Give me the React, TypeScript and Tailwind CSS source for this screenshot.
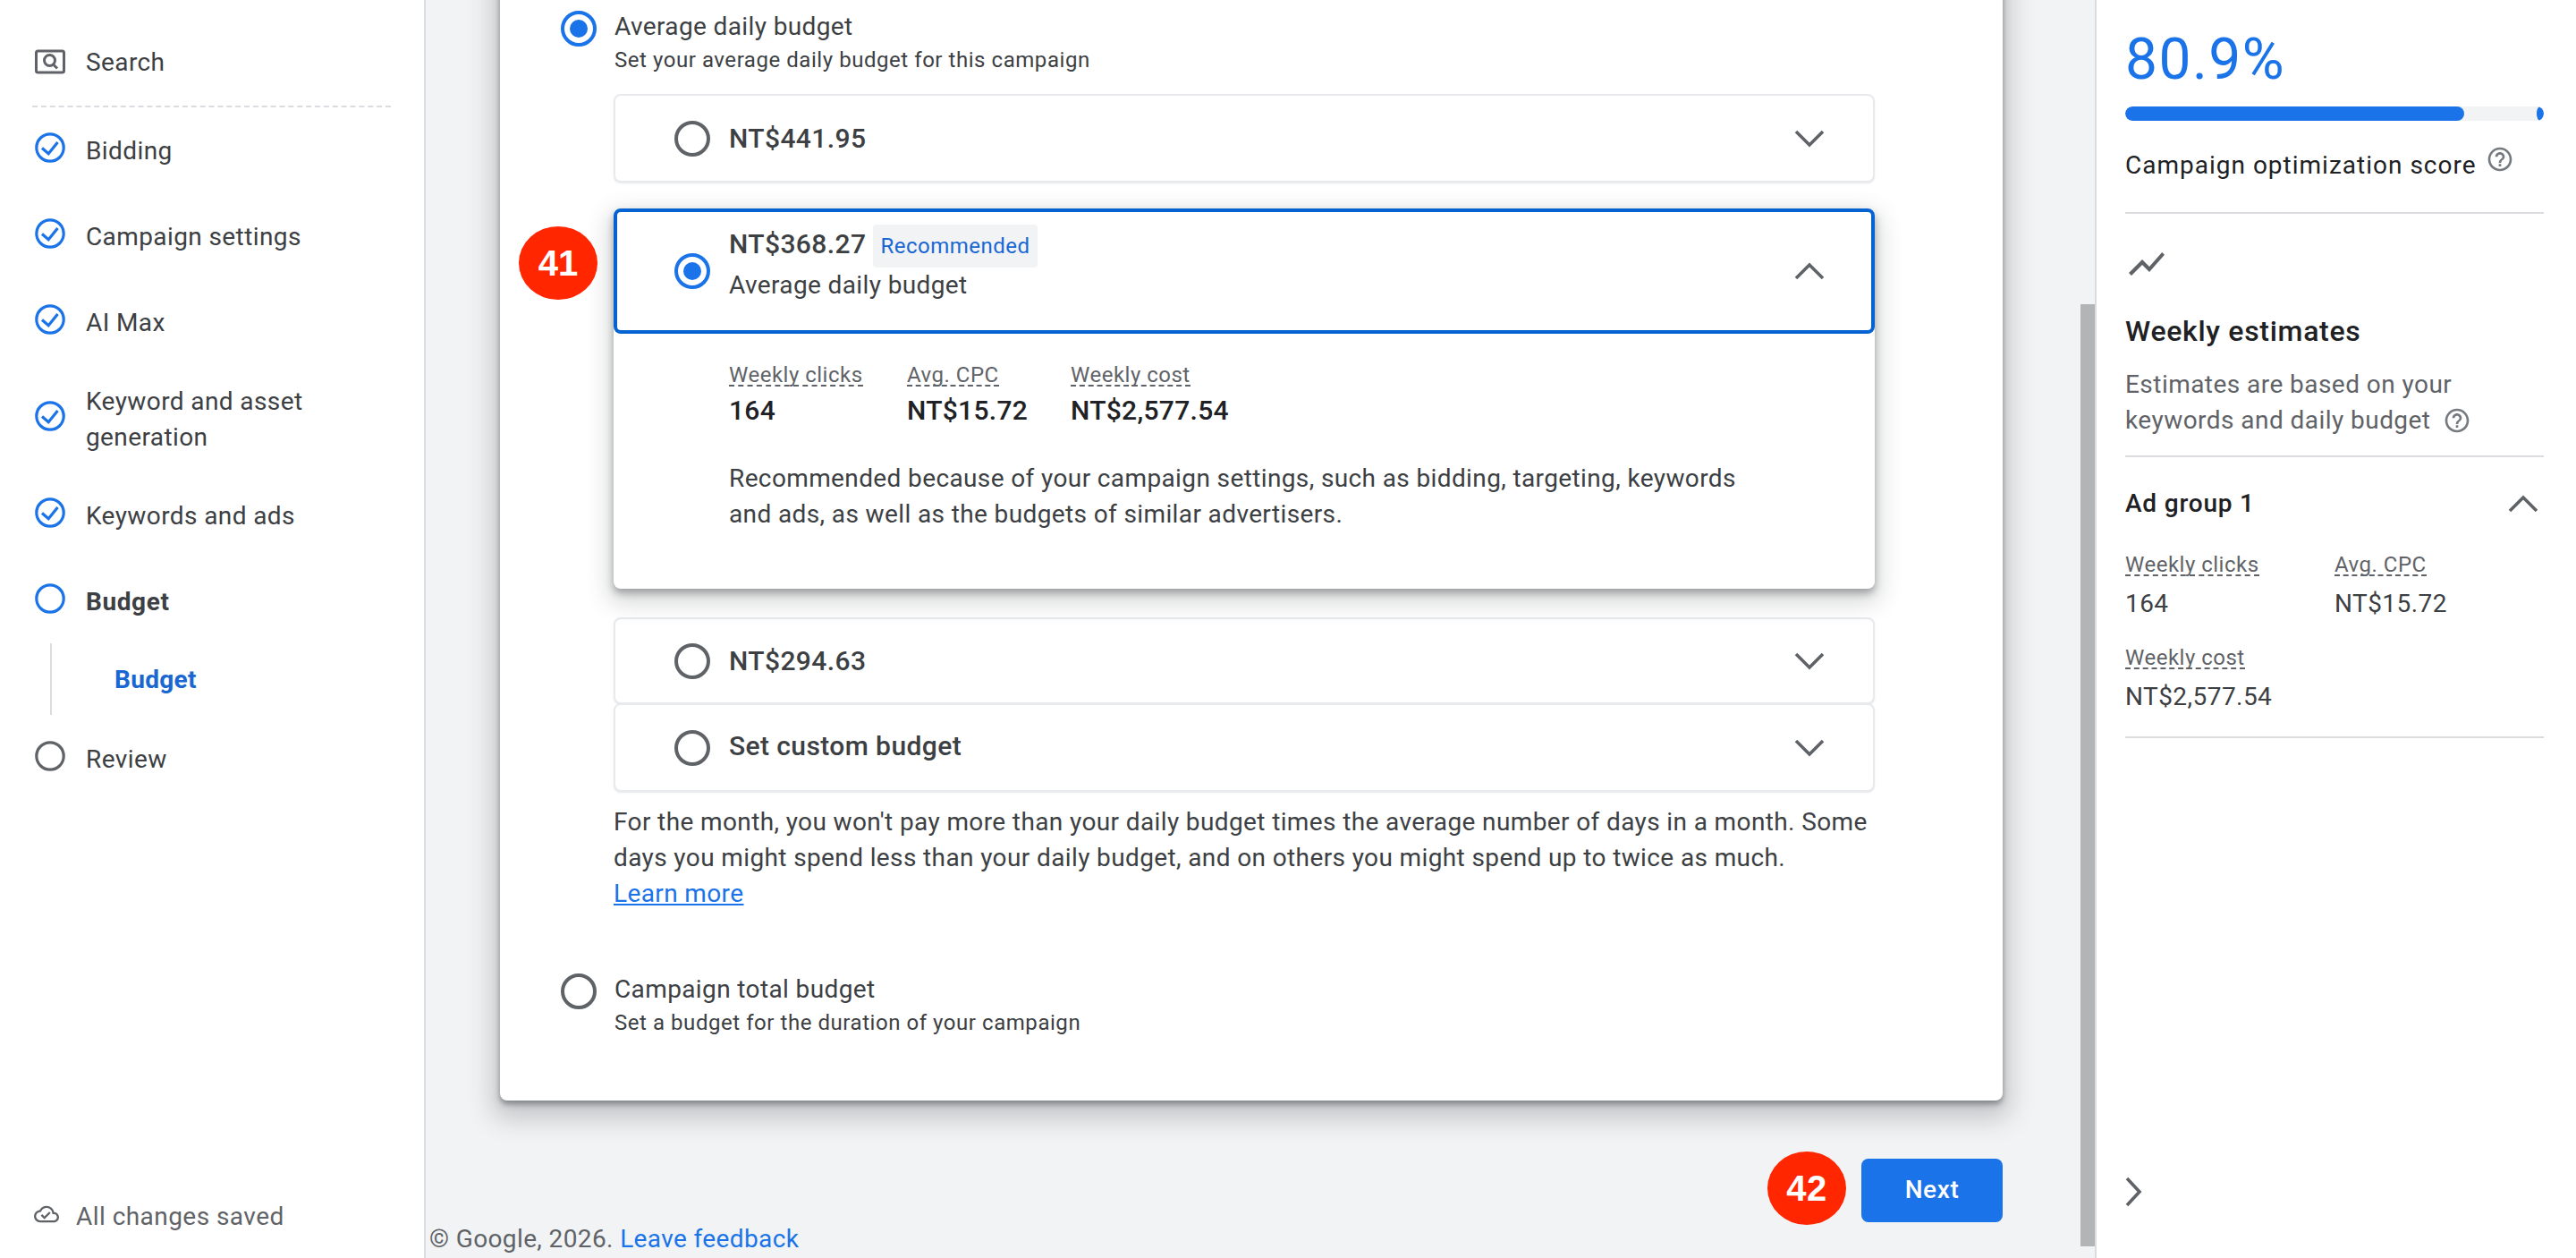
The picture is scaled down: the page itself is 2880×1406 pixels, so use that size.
import React from "react";

const Check = () => (
  <svg width="34" height="34" viewBox="0 0 34 34" fill="none" className="shrink-0">
    <circle cx="17" cy="17" r="15.2" stroke="#1a73e8" strokeWidth="3.2" />
    <path d="M8 17.5l7.2 6.3L25.5 11" stroke="#1a73e8" strokeWidth="3.2" />
  </svg>
);
const Ring = ({ color }: { color: string }) => (
  <svg width="34" height="34" viewBox="0 0 34 34" fill="none" className="shrink-0">
    <circle cx="17" cy="17" r="15.2" stroke={color} strokeWidth="3.2" />
  </svg>
);
const SearchIcon = () => (
  <svg width="34" height="34" viewBox="0 0 34 34" fill="none" className="shrink-0">
    <rect x="1.5" y="5" width="31" height="24" rx="2" stroke="#5f6368" strokeWidth="3" />
    <circle cx="16.5" cy="15.5" r="6" stroke="#5f6368" strokeWidth="3" />
    <path d="M20.5 20l4.5 4.5" stroke="#5f6368" strokeWidth="3" />
  </svg>
);
const Radio = ({ on }: { on?: boolean }) => (
  <svg width="40" height="40" viewBox="0 0 40 40" fill="none" className="shrink-0">
    <circle cx="20" cy="20" r="18" stroke={on ? "#1a73e8" : "#5f6368"} strokeWidth="4" />
    {on && <circle cx="20" cy="20" r="10" fill="#1a73e8" />}
  </svg>
);
const Chevron = ({ dir }: { dir: "up" | "down" | "right" }) => {
  if (dir === "right")
    return (
      <svg width="20" height="34" viewBox="0 0 20 34" fill="none">
        <path d="M2 2l14 15L2 32" stroke="#5f6368" strokeWidth="3.6" />
      </svg>
    );
  return (
    <svg width="34" height="20" viewBox="0 0 34 20" fill="none">
      <path d={dir === "down" ? "M2 2l15 15L32 2" : "M2 18L17 3l15 15"} stroke="#5f6368" strokeWidth="3.6" />
    </svg>
  );
};
const Help = () => (
  <svg width="32" height="32" viewBox="0 0 24 24" fill="#757a80" className="shrink-0">
    <path d="M11 18h2v-2h-2v2zm1-16C6.48 2 2 6.48 2 12s4.48 10 10 10 10-4.48 10-10S17.52 2 12 2zm0 18c-4.41 0-8-3.59-8-8s3.59-8 8-8 8 3.59 8 8-3.59 8-8 8zm0-14c-2.21 0-4 1.79-4 4h2c0-1.1.9-2 2-2s2 .9 2 2c0 2-3 1.75-3 5h2c0-2.25 3-2.5 3-5 0-2.21-1.79-4-4-4z" />
  </svg>
);
const Badge = ({ n, cls }: { n: string; cls: string }) => (
  <div className={"absolute flex h-[82px] w-[88px] items-center justify-center rounded-[50%] bg-[#ff2600] font-['Liberation_Sans',sans-serif] text-[40px] font-bold text-white " + cls}>
    {n}
  </div>
);

const NavRow = ({ icon, children, h = "h-[96px]", t = "mt-[7px]" }: { icon: React.ReactNode; children: React.ReactNode; h?: string; t?: string }) => (
  <div className={"flex items-center gap-[23px] pl-[3px] text-[28px] leading-[40px] tracking-[0.4px] text-[#3c4043] " + h}>
    {icon}
    <div className={t}>{children}</div>
  </div>
);

const Option = ({ label, h, t = "" }: { label: string; h: string; t?: string }) => (
  <div className={"flex items-center justify-between rounded-[8px] border-2 border-[#e8eaed] bg-white pl-[66px] pr-[54px] shadow-[0_1px_2px_rgba(60,64,67,0.12)] " + h}>
    <div className="flex items-center gap-[21px]">
      <Radio />
      <span className={"text-[30px] font-medium leading-[40px] tracking-[0.4px] text-[#3c4043] " + t}>{label}</span>
    </div>
    <Chevron dir="down" />
  </div>
);

const Dashed = ({ children }: { children: React.ReactNode }) => (
  <span className="inline-block border-b-2 border-dashed border-[#5f6368] text-[24px] leading-[22px] tracking-[0.5px] text-[#5f6368]">{children}</span>
);

export default function App() {
  return (
    <div className="flex h-screen w-full overflow-hidden bg-white font-['Roboto',sans-serif]">
      {/* left nav */}
      <aside className="flex w-[476px] shrink-0 flex-col border-r-2 border-[#dadce0] bg-white pl-[36px] pr-[37px] pt-[21px]">
        <div className="-mb-[3px] h-[99px] border-b-2 border-dashed border-[#dadce0]">
          <NavRow icon={<SearchIcon />} t="mt-[1px]">Search</NavRow>
        </div>
        <NavRow icon={<Check />}>Bidding</NavRow>
        <NavRow icon={<Check />}>Campaign settings</NavRow>
        <NavRow icon={<Check />}>AI Max</NavRow>
        <NavRow icon={<Check />} h="h-[120px]">
          Keyword and asset
          <br />
          generation
        </NavRow>
        <NavRow icon={<Check />}>Keywords and ads</NavRow>
        <NavRow icon={<Ring color="#1a73e8" />}>
          <span className="font-bold tracking-[0.6px]">Budget</span>
        </NavRow>
        <div className="ml-[20px] mt-[2px] -mb-[2px] flex h-[80px] items-center border-l-2 border-[#dadce0] pl-[70px] text-[28px] font-bold leading-[40px] tracking-[0.3px] text-[#1a67d2]">
          <span className="mt-[2px]">Budget</span>
        </div>
        <NavRow icon={<Ring color="#5f6368" />}>Review</NavRow>
        <div className="mt-auto mb-[26px] flex h-[40px] items-center gap-[19px] pl-[2px] text-[28px] leading-[40px] tracking-[0.45px] text-[#5f6368]">
          <svg width="28" height="28" viewBox="0 0 24 24" fill="#5f6368" className="-mt-[6px] shrink-0">
            <path d="M19.35 10.04C18.67 6.59 15.64 4 12 4 9.11 4 6.6 5.64 5.35 8.04 2.34 8.36 0 10.91 0 14c0 3.31 2.69 6 6 6h13c2.76 0 5-2.24 5-5 0-2.64-2.05-4.78-4.65-4.96zM19 18H6c-2.21 0-4-1.79-4-4 0-2.05 1.53-3.76 3.56-3.97l1.07-.11.5-.95C8.08 7.14 9.94 6 12 6c2.62 0 4.88 1.86 5.39 4.43l.3 1.5 1.53.11c1.56.1 2.78 1.41 2.78 2.96 0 1.65-1.35 3-3 3zm-9-3.82l-2.09-2.09L6.5 13.5 10 17l6.01-6.01-1.41-1.41z" />
          </svg>
          All changes saved
        </div>
      </aside>

      {/* main */}
      <main className="relative flex min-w-0 flex-1 flex-col bg-[#f1f3f4]">
        <div className="absolute bottom-[13px] right-0 top-[340px] w-[16px] bg-[#b3b4b6]" />
        <div className="ml-[83px] mr-[103px] -mt-[40px] rounded-[8px] bg-white pb-[71px] pt-[50px] shadow-[0_4px_6px_rgba(60,64,67,0.5),0_12px_28px_8px_rgba(60,64,67,0.25)]">
          <div className="ml-[68px] flex gap-[20px]">
            <div className="mt-[2px]">
              <Radio on />
            </div>
            <div>
              <div className="text-[28px] leading-[40px] tracking-[0.38px] text-[#3c4043]">Average daily budget</div>
              <div className="mt-px text-[24px] leading-[32px] tracking-[0.55px] text-[#3c4043]">Set your average daily budget for this campaign</div>
            </div>
          </div>
          <div className="ml-[127px] mr-[143px]">
            <div className="mt-[22px]">
              <Option label="NT$441.95" h="h-[99px]" />
            </div>
            <div className="relative mt-[29px] rounded-[8px] bg-white shadow-[0_5px_8px_rgba(60,64,67,0.4),0_10px_26px_6px_rgba(60,64,67,0.2)]">
              <Badge n="41" cls="-left-[106px] top-[20px]" />
              <div className="flex h-[140px] items-center justify-between rounded-[8px] border-4 border-[#0563d1] pl-[64px] pr-[52px]">
                <div className="flex h-full items-center gap-[21px]">
                  <Radio on />
                  <div className="self-start pt-[14px]">
                    <div className="flex h-[48px] items-center gap-[8px]">
                      <span className="-mt-[4px] text-[30px] font-medium leading-[40px] tracking-[0.4px] text-[#3c4043]">NT$368.27</span>
                      <span className="flex h-[48px] items-center rounded-[4px] bg-[#f1f3f4] px-[8px] text-[24px] tracking-[0.5px] text-[#1967d2]">Recommended</span>
                    </div>
                    <div className="text-[28px] leading-[40px] tracking-[0.38px] text-[#3c4043]">Average daily budget</div>
                  </div>
                </div>
                <Chevron dir="up" />
              </div>
              <div className="h-[285px] pl-[129px] pt-[35px]">
                <div className="flex">
                  <div className="w-[199px]">
                    <Dashed>Weekly clicks</Dashed>
                    <div className="mt-[5px] text-[30px] font-medium leading-[40px] tracking-[0.3px] text-[#202124]">164</div>
                  </div>
                  <div className="w-[183px]">
                    <Dashed>Avg. CPC</Dashed>
                    <div className="mt-[5px] text-[30px] font-medium leading-[40px] tracking-[0.3px] text-[#202124]">NT$15.72</div>
                  </div>
                  <div>
                    <Dashed>Weekly cost</Dashed>
                    <div className="mt-[5px] text-[30px] font-medium leading-[40px] tracking-[0.3px] text-[#202124]">NT$2,577.54</div>
                  </div>
                </div>
                <p className="mt-[36px] w-[1140px] text-[28px] leading-[40px] tracking-[0.38px] text-[#3c4043]">
                  Recommended because of your campaign settings, such as bidding, targeting, keywords and ads, as well as the budgets of similar advertisers.
                </p>
              </div>
            </div>
            <div className="mt-[32px]">
              <Option label="NT$294.63" h="h-[97px]" />
              <Option label="Set custom budget" h="-mt-px h-[99px]" t="-mt-[4px]" />
            </div>
            <p className="mt-[14px] text-[28px] leading-[40px] tracking-[0.38px] text-[#3c4043]">
              For the month, you won't pay more than your daily budget times the average number of days in a month. Some days you might spend less than your daily budget, and on others you might spend up to twice as much.
              <br />
              <a className="text-[#1a73e8] underline">Learn more</a>
            </p>
          </div>
          <div className="ml-[68px] mt-[67px] flex gap-[20px]">
            <div className="mt-[2px]">
              <Radio />
            </div>
            <div>
              <div className="text-[28px] leading-[40px] tracking-[0.38px] text-[#3c4043]">Campaign total budget</div>
              <div className="mt-px text-[24px] leading-[32px] tracking-[0.55px] text-[#3c4043]">Set a budget for the duration of your campaign</div>
            </div>
          </div>
        </div>
        <div className="mr-[103px] mt-[65px] flex justify-end">
          <button className="relative h-[71px] w-[158px] rounded-[8px] bg-[#1a73e8] text-[28px] font-medium tracking-[0.6px] text-white">
            <span className="-mt-[2px] block">Next</span>
            <Badge n="42" cls="-left-[105px] -top-[8px]" />
          </button>
        </div>
        <div className="-mt-px pl-[4px] text-[28px] leading-[40px] tracking-[0.38px] text-[#5f6368]">
          © Google, 2026. <a className="text-[#1a73e8]">Leave feedback</a>
        </div>
      </main>

      {/* right panel */}
      <aside className="relative flex w-[538px] shrink-0 flex-col border-l-2 border-[#dadce0] bg-white pl-[32px] pr-[36px]">
        <div className="mt-[29px] text-[64px] leading-[76px] tracking-[1.5px] text-[#1a73e8]">80.9%</div>
        <div className="relative mt-[14px] h-[16px] overflow-hidden rounded-[8px] bg-[#f1f3f4]">
          <div className="h-full w-[379px] rounded-[8px] bg-[#1a73e8]" />
          <div className="absolute right-0 top-0 h-[16px] w-[8px] rounded-[50%] bg-[#1a73e8]" />
        </div>
        <div className="mt-[30px] flex h-[40px] items-center gap-[10px] text-[28px] font-normal tracking-[1px] text-[#202124]">
          Campaign optimization score
          <span className="-mt-[14px]">
            <Help />
          </span>
        </div>
        <div className="mt-[32px] h-[2px] bg-[#dadce0]" />
        <svg width="48" height="48" viewBox="0 0 24 24" fill="#5f6368" className="mt-[32px] shrink-0">
          <path d="M3.5 18.49l6-6.01 4 4L22 6.92l-1.41-1.41-7.09 7.97-4-4L2 16.99z" />
        </svg>
        <div className="mt-[29px] text-[32px] font-medium leading-[44px] tracking-[0.7px] text-[#202124]">Weekly estimates</div>
        <div className="mt-[18px] text-[28px] leading-[40px] tracking-[0.45px] text-[#5f6368]">
          Estimates are based on your
          <div className="flex items-center gap-[14px]">
            keywords and daily budget
            <Help />
          </div>
        </div>
        <div className="mt-[19px] h-[2px] bg-[#dadce0]" />
        <div className="mt-[32px] flex h-[40px] items-center justify-between pr-[6px] text-[28px] font-medium tracking-[0.8px] text-[#202124]">
          Ad group 1
          <Chevron dir="up" />
        </div>
        <div className="mt-[37px] grid grid-cols-[234px_1fr]">
          <div>
            <Dashed>Weekly clicks</Dashed>
            <div className="mt-[9px] text-[28px] leading-[40px] tracking-[0.45px] text-[#3c4043]">164</div>
          </div>
          <div>
            <Dashed>Avg. CPC</Dashed>
            <div className="mt-[9px] text-[28px] leading-[40px] tracking-[0.45px] text-[#3c4043]">NT$15.72</div>
          </div>
          <div className="col-span-2 mt-[29px]">
            <Dashed>Weekly cost</Dashed>
            <div className="mt-[9px] text-[28px] leading-[40px] tracking-[0.45px] text-[#3c4043]">NT$2,577.54</div>
          </div>
        </div>
        <div className="mt-[24px] h-[2px] bg-[#dadce0]" />
        <div className="mb-[57px] mt-auto">
          <Chevron dir="right" />
        </div>
      </aside>
    </div>
  );
}
